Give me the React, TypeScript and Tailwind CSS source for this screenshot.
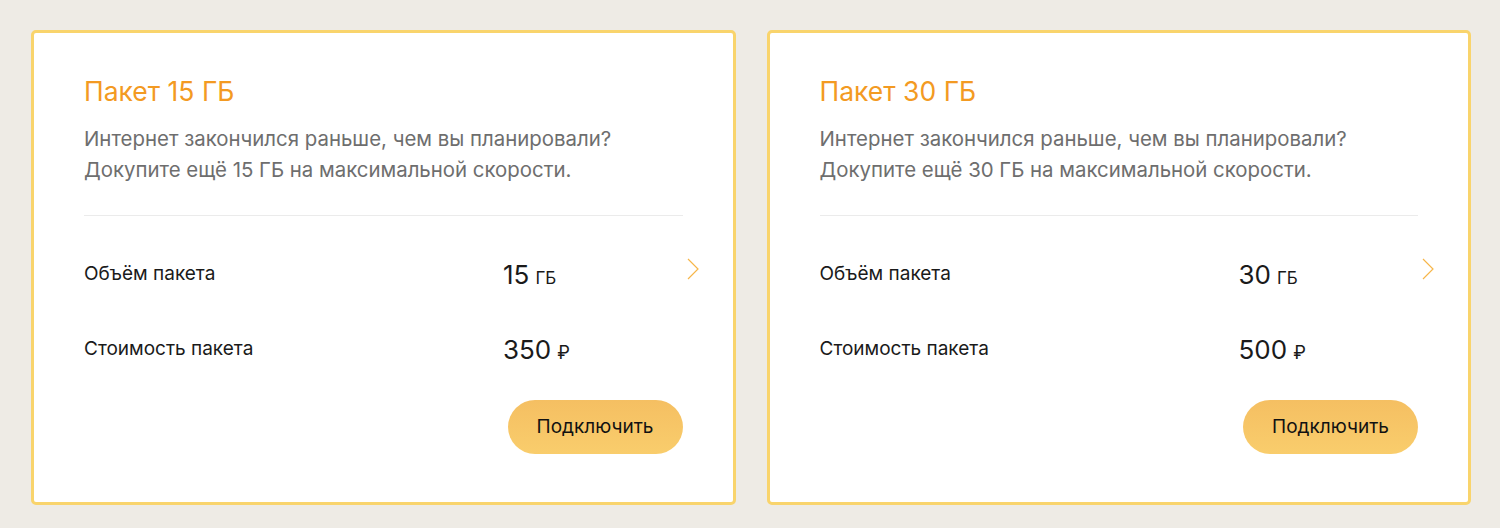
const packs = [
  { title: "Пакет 15 ГБ", gb: "15", price: "350" },
  { title: "Пакет 30 ГБ", gb: "30", price: "500" },
];

function Card({ title, gb, price }: { title: string; gb: string; price: string }) {
  return (
    <div className="relative flex-1 rounded-[5px] border-[3px] border-[#f9d46c] bg-white px-[50px] pt-[42px] pb-[47px]">
      <h2 className="text-[26.5px] leading-[32px] text-[#f39a22]">{title}</h2>
      <p className="mt-[16px] text-[20.4px] leading-[31px] text-[#6e6e6e]">
        Интернет закончился раньше, чем вы планировали?
        <br />
        Докупите ещё {gb} ГБ на максимальной скорости.
      </p>
      <div className="mt-[30px] h-px bg-[#ebebeb]" />
      <div className="relative pt-[39px]">
        <div className="grid h-[36px] grid-cols-[419px_1fr] items-center">
          <span className="text-[19px] text-[#1a1a1a]">Объём пакета</span>
          <span className="text-[#1a1a1a]">
            <span className="text-[26px]">{gb}</span>
            <span className="ml-[6px] text-[17px]">ГБ</span>
          </span>
        </div>
        <div className="mt-[39px] grid h-[36px] grid-cols-[419px_1fr] items-center">
          <span className="text-[19px] text-[#1a1a1a]">Стоимость пакета</span>
          <span className="text-[#1a1a1a]">
            <span className="text-[26px]">{price}</span>
            <span className="ml-[6px] text-[18px]">₽</span>
          </span>
        </div>
        <svg
          className="absolute right-[-16px] top-[42px]"
          width="12"
          height="22"
          viewBox="0 0 12 22"
          fill="none"
          stroke="#f6b64a"
          strokeWidth="1.2"
        >
          <path d="M1 1l10 10-10 10" />
        </svg>
      </div>
      <div className="mt-[34px] flex justify-end">
        <button className="h-[54px] w-[175px] rounded-full bg-gradient-to-b from-[#f5bf62] to-[#f9cd6c] text-[19px] text-[#111]">
          Подключить
        </button>
      </div>
    </div>
  );
}

export default function App() {
  return (
    <div
      className="flex h-[528px] gap-[31px] bg-[#eeebe5] pt-[30px] pl-[31px] pr-[29px]"
      style={{ fontFamily: 'Inter, "Noto Sans", sans-serif' }}
    >
      {packs.map((p) => (
        <div key={p.gb} className="flex h-[475px] flex-1">
          <Card {...p} />
        </div>
      ))}
    </div>
  );
}
